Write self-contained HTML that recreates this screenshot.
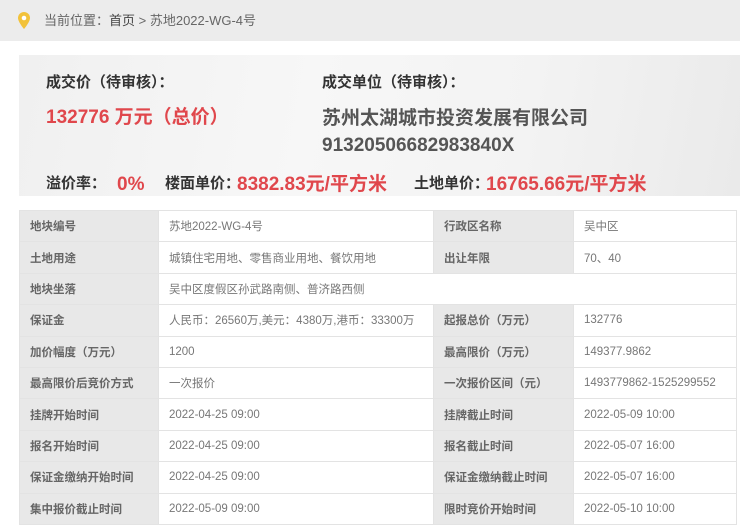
<!DOCTYPE html><html><head><meta charset="utf-8"><style>
body{margin:0;width:740px;height:505px;overflow:hidden;background:#fff;font-family:"Liberation Sans","Noto Sans CJK SC",sans-serif;position:relative}
.top{position:absolute;left:0;top:0;width:740px;height:41px;background:#ececec;font-size:13px;color:#666;line-height:41px}
.top span{position:absolute;left:44px}
.panel{position:absolute;left:19px;top:55px;width:721px;height:141px;background:linear-gradient(100deg,#f0f0f0,#f7f7f7 40%,#f3f3f3 70%,#eaeaea)}
.a{position:absolute;white-space:nowrap;font-weight:bold;line-height:1}
table{position:absolute;left:19px;top:210px;border-collapse:collapse;font-size:11.5px}
td{border:1px solid #e3e3e3;height:31.4px;padding:0 0 0 10px;color:#777;box-sizing:border-box;vertical-align:middle}
td.l{background:#e8e8e8;color:#666;font-weight:bold}
</style></head><body>
<div class="top"><svg style="position:absolute;left:18px;top:12px" width="12" height="18" viewBox="0 0 12 18"><path d="M6 0A6 6 0 0 0 0 6c0 4 6 11 6 11s6-7 6-11A6 6 0 0 0 6 0z" fill="#f2c23a"/><circle cx="6" cy="6" r="2.3" fill="#fff"/></svg><span>当前位置：<b style="font-weight:normal;color:#444">首页</b> &gt; 苏地2022-WG-4号</span></div>
<div class="panel"></div>
<div class="a" style="left:46px;top:75px;font-size:15px;color:#333">成交价（待审核）：</div>
<div class="a" style="left:46px;top:108px;font-size:19px;color:#e0474c">132776 万元（总价）</div>
<div class="a" style="left:322px;top:75px;font-size:15px;color:#333">成交单位（待审核）：</div>
<div class="a" style="left:322px;top:109px;font-size:19px;color:#555">苏州太湖城市投资发展有限公司</div>
<div class="a" style="left:322px;top:136px;font-size:19px;color:#555">91320506682983840X</div>
<div class="a" style="left:46px;top:176px;font-size:15px;color:#333">溢价率：</div>
<div class="a" style="left:117px;top:175px;font-size:19px;color:#e0474c">0%</div>
<div class="a" style="left:165px;top:176px;font-size:15px;color:#333">楼面单价：</div>
<div class="a" style="left:237px;top:175px;font-size:19px;color:#e0474c">8382.83元/平方米</div>
<div class="a" style="left:414px;top:176px;font-size:15px;color:#333">土地单价：</div>
<div class="a" style="left:486px;top:175px;font-size:19px;color:#e0474c">16765.66元/平方米</div>
<table>
<colgroup><col style="width:139px"><col style="width:275px"><col style="width:140px"><col style="width:163px"></colgroup>
<tr><td class="l">地块编号</td><td>苏地2022-WG-4号</td><td class="l">行政区名称</td><td>吴中区</td></tr>
<tr><td class="l">土地用途</td><td>城镇住宅用地、零售商业用地、餐饮用地</td><td class="l">出让年限</td><td>70、40</td></tr>
<tr><td class="l">地块坐落</td><td colspan="3">吴中区度假区孙武路南侧、普济路西侧</td></tr>
<tr><td class="l">保证金</td><td>人民币：26560万,美元：4380万,港币：33300万</td><td class="l">起报总价（万元）</td><td>132776</td></tr>
<tr><td class="l">加价幅度（万元）</td><td>1200</td><td class="l">最高限价（万元）</td><td>149377.9862</td></tr>
<tr><td class="l">最高限价后竞价方式</td><td>一次报价</td><td class="l">一次报价区间（元）</td><td>1493779862-1525299552</td></tr>
<tr><td class="l">挂牌开始时间</td><td>2022-04-25 09:00</td><td class="l">挂牌截止时间</td><td>2022-05-09 10:00</td></tr>
<tr><td class="l">报名开始时间</td><td>2022-04-25 09:00</td><td class="l">报名截止时间</td><td>2022-05-07 16:00</td></tr>
<tr><td class="l">保证金缴纳开始时间</td><td>2022-04-25 09:00</td><td class="l">保证金缴纳截止时间</td><td>2022-05-07 16:00</td></tr>
<tr><td class="l">集中报价截止时间</td><td>2022-05-09 09:00</td><td class="l">限时竞价开始时间</td><td>2022-05-10 10:00</td></tr>
</table>
</body></html>
